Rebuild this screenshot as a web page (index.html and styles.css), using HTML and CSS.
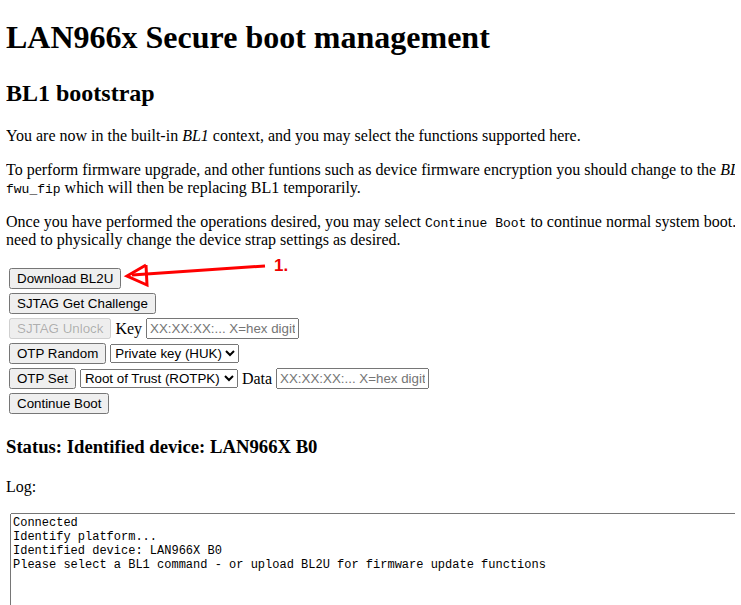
FILE: index.html
```html
<!DOCTYPE html>
<html>
<head>
<meta charset="utf-8">
<title>LAN966x Secure boot management</title>
<link rel="stylesheet" href="styles.css">
</head>
<body>
<h1 class="title">LAN966x Secure boot management</h1>
<h2 class="subtitle">BL1 bootstrap</h2>
<p>You are now in the built-in <i>BL1</i> context, and you may select the functions supported here.</p>
<p>To perform firmware upgrade, and other funtions such as device firmware encryption you should change to the <i>BL2U</i> context by uploading the<br><code>fwu_fip</code> which will then be replacing BL1 temporarily.</p>
<p>Once you have performed the operations desired, you may select <code>Continue Boot</code> to continue normal system boot. You may<br>need to physically change the device strap settings as desired.</p>
<div class="controls">
  <div class="row"><button>Download BL2U</button></div>
  <div class="row"><button>SJTAG Get Challenge</button></div>
  <div class="row"><button disabled>SJTAG Unlock</button> Key <input class="hex" placeholder="XX:XX:XX:... X=hex digit"></div>
  <div class="row"><button>OTP Random</button> <select><option>Private key (HUK)</option></select></div>
  <div class="row"><button>OTP Set</button> <select><option>Root of Trust (ROTPK)</option></select> Data <input class="hex" placeholder="XX:XX:XX:... X=hex digit"></div>
  <div class="row"><button>Continue Boot</button></div>
</div>
<h3 class="status">Status: Identified device: LAN966X B0</h3>
<p>Log:</p>
<textarea class="log" readonly>Connected
Identify platform...
Identified device: LAN966X B0
Please select a BL1 command - or upload BL2U for firmware update functions</textarea>
<svg class="annot" width="741" height="605" viewBox="0 0 741 605">
  <line x1="265" y1="266" x2="132" y2="275" stroke="#f00" stroke-width="3"/>
  <polyline points="146,265 127,276 147,285 146,265" fill="none" stroke="#f00" stroke-width="3" stroke-linejoin="miter"/>
  <text x="274" y="271" class="annot-label">1.</text>
</svg>
</body>
</html>
```
FILE: styles.css
```css
html { overflow: hidden; }
body {
  margin: 8px 6px;
  font-family: "Liberation Serif", serif;
  font-size: 16px;
  white-space: nowrap;
  overflow: hidden;
}
.title { font-size: 32px; margin: 11px 0 24px; }
.subtitle { font-size: 24px; margin: 24px 0 20px; }
p { margin: 16px 0; }
code { font-family: "Liberation Mono", monospace; font-size: 13px; }
.controls { padding-left: 3px; margin-top: 17px; }
.row { display: flex; align-items: center; gap: 4px; height: 25px; }
button, select, input { font-family: "Liberation Sans", sans-serif; font-size: 13.33px; }
.hex { width: 145px; }
.annot { position: absolute; left: 0; top: 0; pointer-events: none; }
.annot-label { font-family: "Liberation Sans", sans-serif; font-weight: bold; font-size: 17px; fill: #e00; }
.status { font-size: 18.7px; margin: 20px 0; }
.log { display: block; margin-left: 4px; margin-top: 17px; width: 760px; height: 120px; font-family: "Liberation Mono", monospace; font-size: 12px; }
```
